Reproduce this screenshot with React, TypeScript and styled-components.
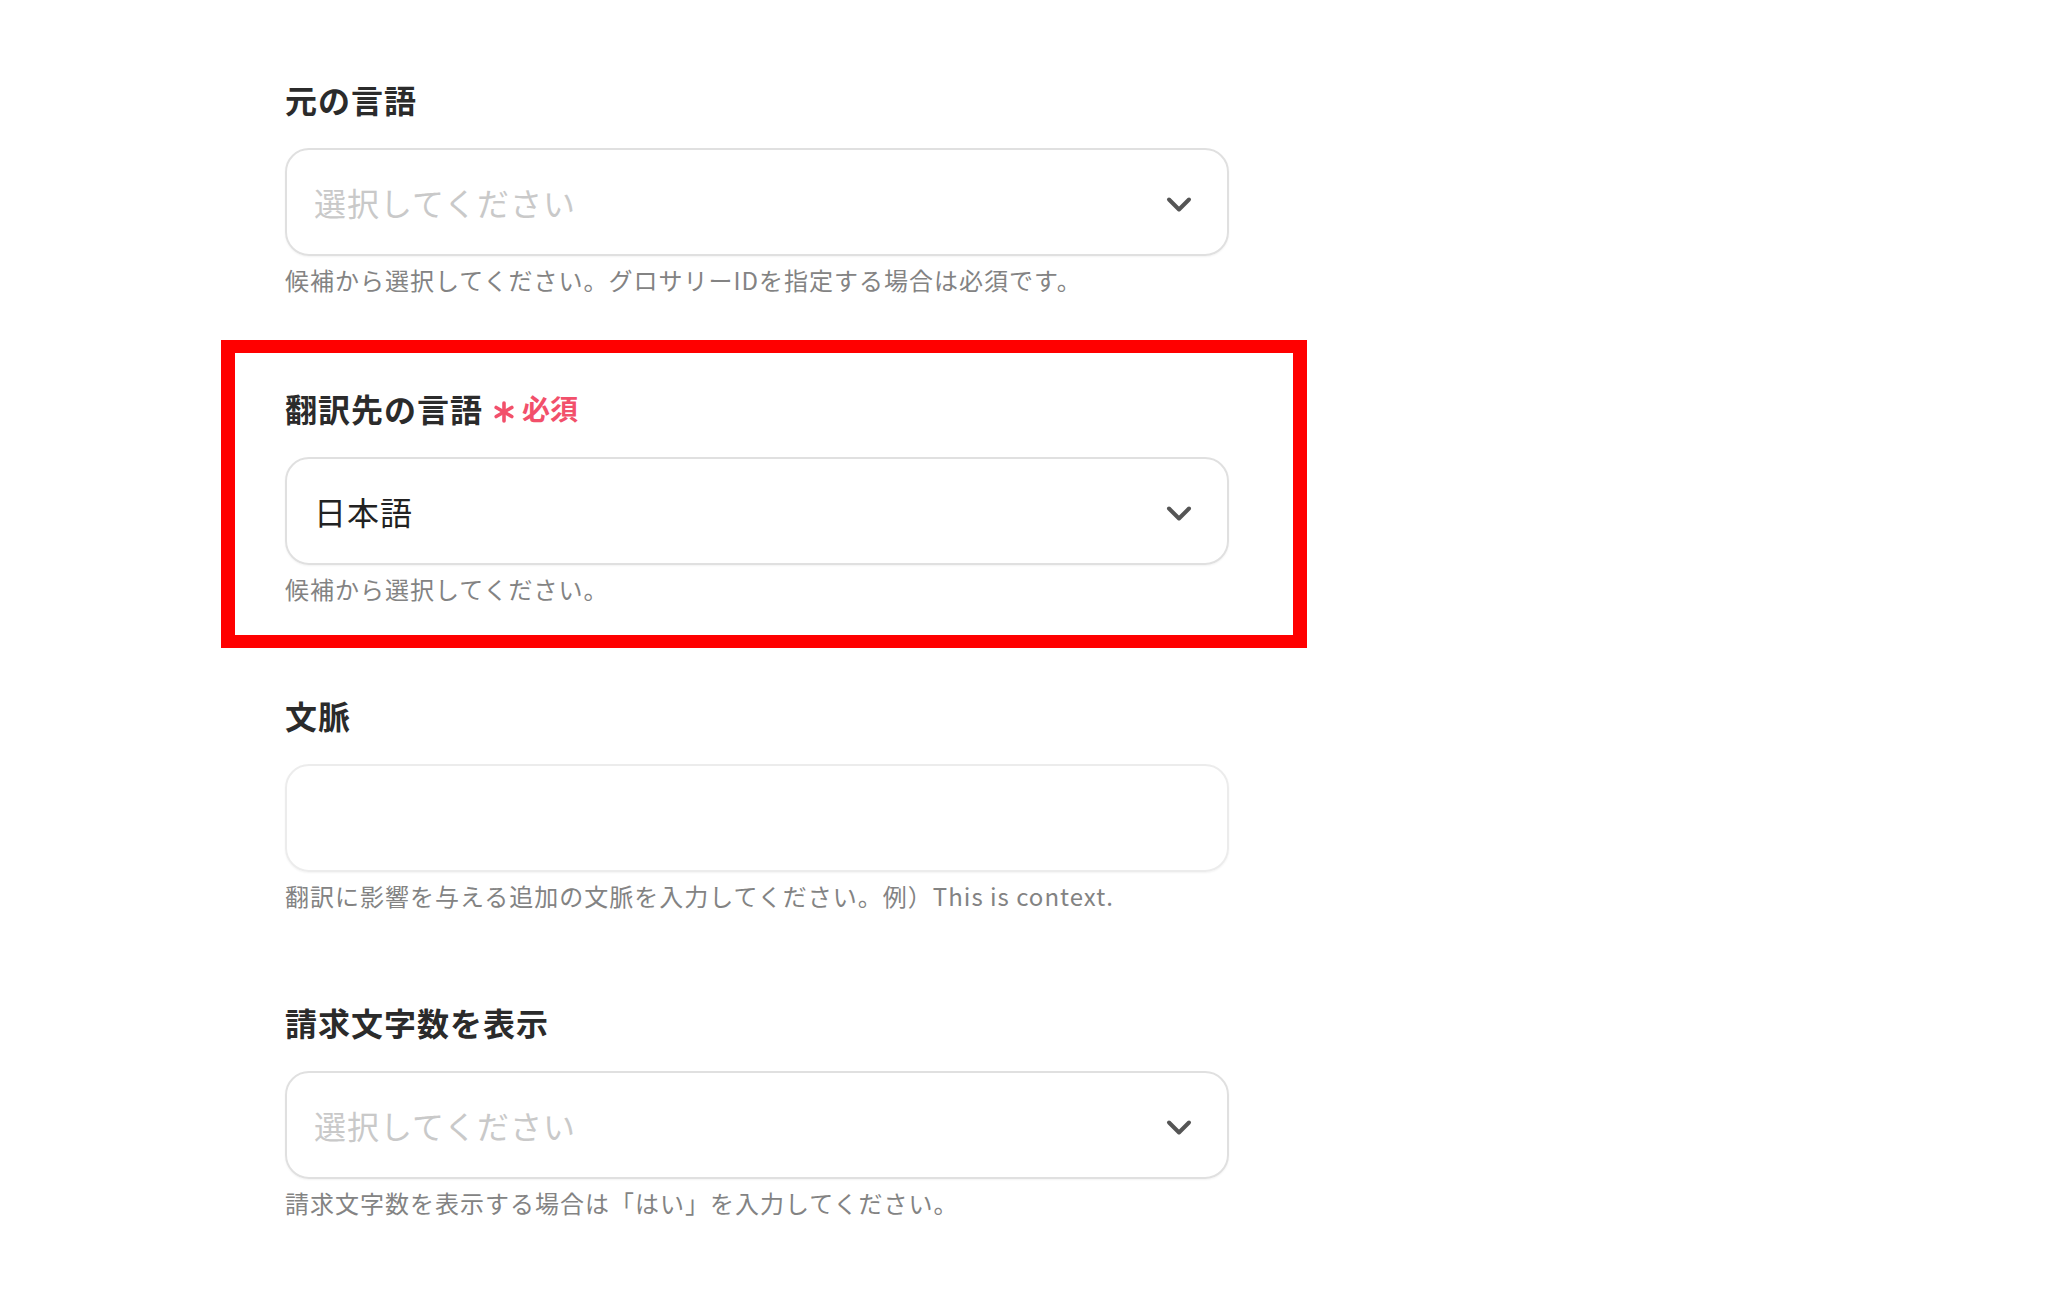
import React from 'react';
import styled, { createGlobalStyle } from 'styled-components';

const GlobalStyle = createGlobalStyle`
  html, body {
    margin: 0;
    padding: 0;
    background: #ffffff;
  }
  body {
    font-family: "Noto Sans CJK JP", "Noto Sans", sans-serif;
    color: #2b2b2b;
  }
`;

const Page = styled.div`
  width: 2048px;
  min-height: 1300px;
  box-sizing: border-box;
  padding: 79px 0 0 285px;
`;

const Form = styled.div`
  width: 944px;
  display: flex;
  flex-direction: column;
  gap: 90px;
`;

const Field = styled.div`
  display: flex;
  flex-direction: column;
`;

// Red annotation frame, kept out of the flow's measurements by negative margins
const Highlight = styled.div`
  border: solid #ff0000;
  border-width: 13px 14px;
  padding: 35px 64px 30px 50px;
  margin: -46px -78px -43px -64px;
`;

const Label = styled.div`
  display: flex;
  align-items: center;
  height: 40px;
  font-size: 32px;
  font-weight: 700;
  letter-spacing: 1px;
  color: #2b2b2b;
`;

const Required = styled.span`
  display: inline-flex;
  align-items: center;
  margin-left: 10px;
  color: #f2506b;
  font-size: 28px;
  font-weight: 700;
  letter-spacing: 0;
`;

const Star = () => (
  <svg
    width="22"
    height="22"
    viewBox="0 0 22 22"
    style={{ marginRight: 7, marginTop: 8 }}
  >
    <g stroke="#f2506b" strokeWidth="3.6" strokeLinecap="round">
      <line x1="11" y1="2" x2="11" y2="20" />
      <line x1="3.2" y1="6.5" x2="18.8" y2="15.5" />
      <line x1="3.2" y1="15.5" x2="18.8" y2="6.5" />
    </g>
  </svg>
);

const Box = styled.div<{ $faint?: boolean }>`
  margin-top: 29px;
  height: 108px;
  box-sizing: border-box;
  border: 2px solid ${({ $faint }) => ($faint ? '#ececec' : '#e0e0e0')};
  border-radius: 24px;
  box-shadow: 0 1px 2px rgba(0, 0, 0, 0.05);
  display: flex;
  align-items: center;
  padding: 0 34px 0 27px;
`;

const Value = styled.span<{ $placeholder?: boolean }>`
  flex: 1;
  font-size: 32px;
  letter-spacing: 1px;
  color: ${({ $placeholder }) => ($placeholder ? '#c9c9c9' : '#222222')};
`;

const ChevronIcon = styled.svg`
  margin-top: 6px;
`;

const Chevron = () => (
  <ChevronIcon width="28" height="18" viewBox="0 0 28 18" fill="none">
    <path
      d="M4 3.5 L14 13.5 L24 3.5"
      stroke="#555555"
      strokeWidth="4"
      strokeLinecap="round"
      strokeLinejoin="round"
    />
  </ChevronIcon>
);

const Help = styled.div`
  margin-top: 8px;
  height: 32px;
  line-height: 32px;
  font-size: 24px;
  letter-spacing: 1px;
  color: #838383;
  white-space: nowrap;
`;

function App() {
  return (
    <>
      <GlobalStyle />
      <Page>
        <Form>
          <Field>
            <Label>元の言語</Label>
            <Box>
              <Value $placeholder>選択してください</Value>
              <Chevron />
            </Box>
            <Help>候補から選択してください。グロサリーIDを指定する場合は必須です。</Help>
          </Field>

          <Highlight>
            <Field>
              <Label>
                翻訳先の言語
                <Required>
                  <Star />
                  必須
                </Required>
              </Label>
              <Box>
                <Value>日本語</Value>
                <Chevron />
              </Box>
              <Help>候補から選択してください。</Help>
            </Field>
          </Highlight>

          <Field>
            <Label>文脈</Label>
            <Box $faint />
            <Help>翻訳に影響を与える追加の文脈を入力してください。例）This is context.</Help>
          </Field>

          <Field>
            <Label>請求文字数を表示</Label>
            <Box>
              <Value $placeholder>選択してください</Value>
              <Chevron />
            </Box>
            <Help>請求文字数を表示する場合は「はい」を入力してください。</Help>
          </Field>
        </Form>
      </Page>
    </>
  );
}

export default App;
